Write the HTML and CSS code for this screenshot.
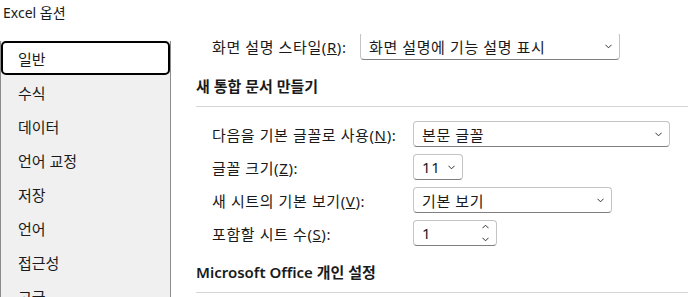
FILE: index.html
```html
<!DOCTYPE html>
<html lang="ko">
<head>
  <meta charset="UTF-8" />
  <title>Excel 옵션</title>
  <link rel="stylesheet" href="styles.css">
</head>
<body>
  <div class="title">Excel 옵션</div>

  <div class="main">
    <nav class="sidebar">
      <div class="nav-item active">일반</div>
      <div class="nav-item">수식</div>
      <div class="nav-item">데이터</div>
      <div class="nav-item">언어 교정</div>
      <div class="nav-item">저장</div>
      <div class="nav-item">언어</div>
      <div class="nav-item">접근성</div>
      <div class="nav-item">고급</div>
    </nav>

    <div class="pane">
      <div class="content">
        <div class="row row-top">
          <span class="label">화면 설명 스타일(<u>R</u>):</span>
          <div class="select sel-tip">
            <span>화면 설명에 기능 설명 표시</span>
            <svg class="chev" viewBox="0 0 8 5"><polyline points="0.5,0.5 4,4 7.5,0.5"/></svg>
          </div>
        </div>

        <h2 class="section">새 통합 문서 만들기</h2>

        <div class="rows">
          <div class="row">
            <span class="label">다음을 기본 글꼴로 사용(<u>N</u>):</span>
            <div class="select sel-font">
              <span>본문 글꼴</span>
              <svg class="chev" viewBox="0 0 8 5"><polyline points="0.5,0.5 4,4 7.5,0.5"/></svg>
            </div>
          </div>
          <div class="row">
            <span class="label">글꼴 크기(<u>Z</u>):</span>
            <div class="select sel-size">
              <span>11</span>
              <svg class="chev" viewBox="0 0 8 5"><polyline points="0.5,0.5 4,4 7.5,0.5"/></svg>
            </div>
          </div>
          <div class="row">
            <span class="label">새 시트의 기본 보기(<u>V</u>):</span>
            <div class="select sel-view">
              <span>기본 보기</span>
              <svg class="chev" viewBox="0 0 8 5"><polyline points="0.5,0.5 4,4 7.5,0.5"/></svg>
            </div>
          </div>
          <div class="row">
            <span class="label">포함할 시트 수(<u>S</u>):</span>
            <div class="select sel-count">
              <span>1</span>
              <div class="spin">
                <svg class="chev" viewBox="0 0 8 5"><polyline points="0.5,4.5 4,1 7.5,4.5"/></svg>
                <svg class="chev" viewBox="0 0 8 5"><polyline points="0.5,0.5 4,4 7.5,0.5"/></svg>
              </div>
            </div>
          </div>
        </div>

        <h2 class="section">Microsoft Office 개인 설정</h2>
      </div>
    </div>
  </div>
</body>
</html>
```

FILE: styles.css
```css
html, body {
  height: 297px;
  overflow: hidden;
}

body {
  margin: 0;
  background: #ffffff;
  color: #1a1a1a;
  font-family: "Noto Sans", "Noto Sans CJK KR", sans-serif;
  font-size: 15px;
}

.title {
  height: 34px;
  padding-left: 3px;
  line-height: 26px;
  font-size: 14px;
}

.main {
  display: flex;
  height: 263px;
}

/* left nav */
.sidebar {
  flex: none;
  width: 171px;
  box-sizing: border-box;
  margin-top: 7px;
  background: #f0f0f0;
  border-left: 1px solid #8c8c8c;
  border-right: 1px solid #8c8c8c;
}

.nav-item {
  height: 34px;
  box-sizing: border-box;
  display: flex;
  align-items: center;
  padding-left: 17px;
}

.nav-item.active {
  background: #ffffff;
  border: 2px solid #000000;
  border-radius: 5px;
  padding-left: 15px;
}

/* right pane, scrolled so the first box is cut at the top */
.pane {
  flex: 1;
  overflow: hidden;
}

.content {
  margin-top: -2px;
  padding-left: 25px;
}

.row {
  display: flex;
  align-items: center;
  padding-left: 16px;
  letter-spacing: 0.6px;
}

.row .label {
  flex: none;
  width: 201px;
}

.row-top .label {
  width: 148px;
}

.select {
  flex: none;
  box-sizing: border-box;
  height: 26px;
  display: flex;
  align-items: center;
  justify-content: space-between;
  padding: 0 7px 0 8px;
  border: 1px solid #c4c4c4;
  border-bottom-color: #7f7f7f;
  border-radius: 4px;
}

.sel-tip {
  width: 260px;
  height: 28px;
  border-top-color: transparent;
}
.sel-font { width: 257px; }
.sel-size { width: 50px; }
.sel-view { width: 199px; }
.sel-count { width: 84px; }

.chev {
  width: 7px;
  height: 5px;
  fill: none;
  stroke: #2b2b2b;
  stroke-width: 1.1;
}

.spin {
  display: flex;
  flex-direction: column;
  gap: 8px;
}

.section {
  margin: 16px 0 0;
  padding-bottom: 10px;
  border-bottom: 1px solid #d5d5d5;
  font-size: 15px;
  font-weight: 600;
  line-height: 20px;
}

.rows {
  display: flex;
  flex-direction: column;
  gap: 7px;
  margin: 14px 0 16px;
}
```
